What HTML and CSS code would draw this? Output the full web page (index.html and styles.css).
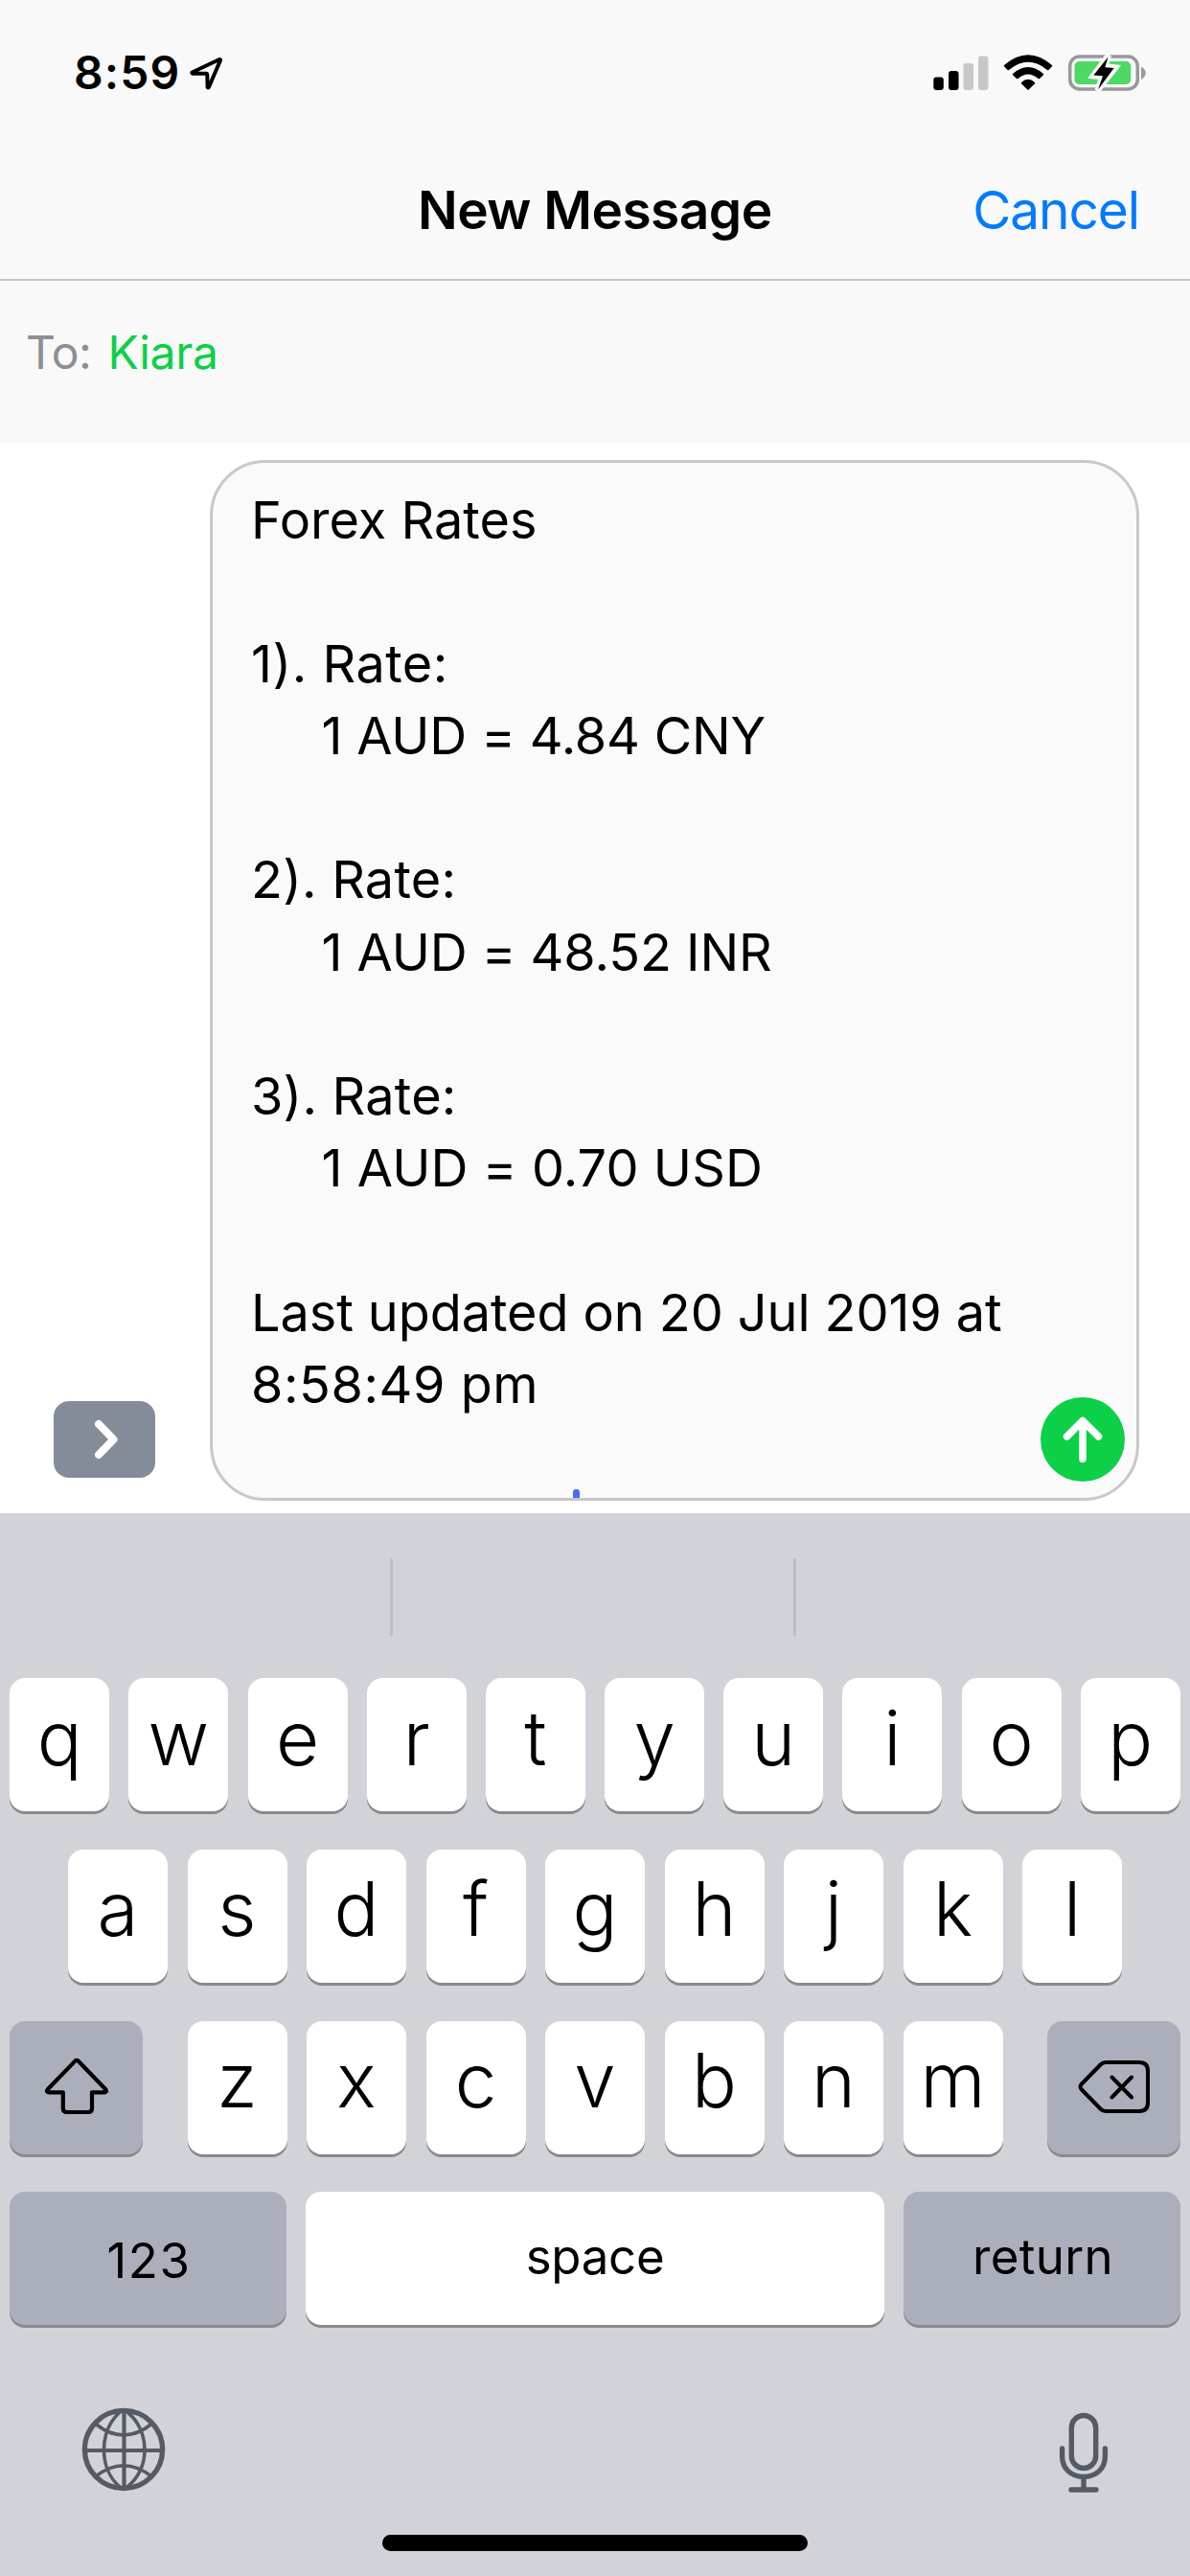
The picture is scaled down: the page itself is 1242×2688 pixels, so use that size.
FILE: index.html
```html
<!DOCTYPE html>
<html lang="en">
<head>
<meta charset="utf-8">
<title>New Message</title>
<link rel="stylesheet" href="styles.css">
</head>
<body>
<div class="screen">
  <header class="header">
    <div class="status">
      <span class="time">8:59</span>
      <svg class="location" width="36" height="36" viewBox="0 0 36 36"><path d="M32 4 L3.5 17.5 Q3 18.5 4 18.7 L18.5 18.8 Q19.3 19 19.3 20 L19.6 33 Q20.4 34 21 32.8 L33 5 Q33.200 3.800 32 4Z" fill="none" stroke="#000" stroke-width="4" stroke-linejoin="round"/></svg>
      <svg class="indicators" width="224" height="40" viewBox="0 0 224 40">
        <rect x="1.300" y="24.500" width="10.500" height="13.500" rx="3" fill="#000"/>
        <rect x="17" y="18" width="10.500" height="20" rx="3" fill="#000"/>
        <rect x="32.500" y="10" width="10.500" height="28" rx="3" fill="#c7c7c7"/>
        <rect x="48" y="2.500" width="10.500" height="35.500" rx="3" fill="#c7c7c7"/>
        <g fill="#000">
          <path d="M75 12 Q100 -9.500 125 12 Q125.500 12.800 124.800 13.500 L121.500 17 Q120.700 17.600 120 17 Q100 0.500 80 17 Q79.300 17.600 78.500 17 L75.200 13.500 Q74.500 12.800 75 12Z"/>
          <path d="M84 21 Q100 7 116 21 Q116.500 21.700 116 22.300 L112 26 Q111.200 26.600 110.500 26 Q100 17 89.500 26 Q88.800 26.600 88 26 L84 22.300 Q83.500 21.700 84 21Z"/>
          <path d="M93 30 Q100 23.500 107 30 Q107.500 30.600 107 31.200 L100.700 37.500 Q100 38.100 99.300 37.500 L93 31.200 Q92.500 30.600 93 30Z"/>
        </g>
        <rect x="143.700" y="3" width="70.600" height="34" rx="10" fill="none" stroke="#999" stroke-width="3.500"/>
        <rect x="148.500" y="8" width="58.700" height="24" rx="5" fill="#4cd964"/>
        <path d="M218 13.500 Q222.700 16 222.700 20.300 Q222.700 24.500 218 27Z" fill="#999"/>
        <path d="M184 1.500 L167.500 23.200 L177 24.200 L172.500 38.500 L191.500 14.300 L181 13.200Z" fill="#f9f9f9" stroke="#f9f9f9" stroke-width="6"/>
        <path d="M183.500 3.500 L168.300 22.500 L178 23.200 L173 37.500 L189.700 15 L180.300 14.300Z" fill="#000"/>
      </svg>
    </div>
    <nav class="nav">
      <h1 class="title">New Message</h1>
      <a class="cancel">Cancel</a>
    </nav>
    <div class="recipient"><span class="to">To:</span><span class="name">Kiara</span></div>
  </header>

  <main class="compose">
    <div class="drawer">
      <svg width="24" height="44" viewBox="0 0 24 44"><path d="M4 6 L19.500 22 L4 38" fill="none" stroke="#fff" stroke-width="8" stroke-linecap="round" stroke-linejoin="round"/></svg>
    </div>
    <div class="bubble">
      <p class="line">Forex Rates</p>
      <p class="line item first">1). Rate:</p>
      <p class="line rate cny">1 AUD = 4.84 CNY</p>
      <p class="line item">2). Rate:</p>
      <p class="line rate">1 AUD = 48.52 INR</p>
      <p class="line item">3). Rate:</p>
      <p class="line rate usd">1 AUD = 0.70 USD</p>
      <p class="line updated">Last updated on 20 Jul 2019 at</p>
      <p class="line clock">8:58:49 pm</p>
      <span class="caret"></span>
      <span class="send"><svg width="88" height="88" viewBox="0 0 88 88"><path d="M27.500 41 L44 24.500 L60.500 41 M44 26 V64.500" fill="none" stroke="#fff" stroke-width="7.500" stroke-linecap="round" stroke-linejoin="round"/></svg></span>
    </div>
  </main>

  <section class="keyboard">
    <div class="suggestions"><i class="bar"></i><i class="bar"></i></div>
    <div class="keys">
      <div class="row">
        <b class="key">q</b><b class="key">w</b><b class="key">e</b><b class="key">r</b><b class="key">t</b><b class="key">y</b><b class="key">u</b><b class="key">i</b><b class="key">o</b><b class="key">p</b>
      </div>
      <div class="row home-row">
        <b class="key">a</b><b class="key">s</b><b class="key">d</b><b class="key">f</b><b class="key">g</b><b class="key">h</b><b class="key">j</b><b class="key">k</b><b class="key">l</b>
      </div>
      <div class="row spread">
        <b class="key dark mod"><svg width="70" height="62" viewBox="0 0 70 62"><path d="M33.400 3.600 Q35 2 36.600 3.600 L65.500 33.500 Q67 36 64 36.300 H51 V53 Q51 57 47 57 H25 Q20.800 57 20.800 53 V36.300 H6 Q3 36 4.500 33.500Z" fill="none" stroke="#000" stroke-width="4.200" stroke-linejoin="round"/></svg></b>
        <div class="letters"><b class="key">z</b><b class="key">x</b><b class="key">c</b><b class="key">v</b><b class="key">b</b><b class="key">n</b><b class="key">m</b></div>
        <b class="key dark mod"><svg width="78" height="60" viewBox="0 0 78 60"><path d="M30 4 H65 Q74 4 74 13 V46 Q74 55 65 55 H30 Q27 55 24.500 52.500 L4.500 32 Q2.500 29.500 4.500 27 L24.500 6.500 Q27 4 30 4Z M36.500 19.500 L57 40.500 M57 19.500 L36.500 40.500" fill="none" stroke="#000" stroke-width="4" stroke-linejoin="round" stroke-linecap="round"/></svg></b>
      </div>
      <div class="row spread">
        <b class="key dark word digits">123</b><b class="key word space">space</b><b class="key dark word return">return</b>
      </div>
    </div>
    <div class="tools">
      <svg width="88" height="88" viewBox="0 0 88 88"><g fill="none" stroke="#555b65"><circle cx="44" cy="44" r="40.600" stroke-width="5.400"/><path d="M44.500 4 V84 M4 45 H84" stroke-width="4.200"/><path d="M40 5 C18 25 18 64 40 83 M48 5 C72 25 72 64 48 83 M15 17.500 Q44 40.500 73 17.500 M15 72 Q44 49.500 73 72" stroke-width="3.600"/></g></svg>
      <svg width="52" height="86" viewBox="0 0 52 86"><g fill="none" stroke="#555b65" stroke-width="5.400" stroke-linecap="round"><rect x="13.300" y="3.500" width="25.400" height="55" rx="12.700"/><path d="M3.600 38 V46 C3.600 59 13 67.500 26 67.500 C39 67.500 48.400 59 48.400 46 V38 M26 68 V80 M13 81 H39"/></g></svg>
    </div>
    <div class="home"></div>
  </section>
</div>
</body>
</html>
```
FILE: styles.css
```css
* { box-sizing: border-box; }

body {
  margin: 0;
  font-family: Inter, "Liberation Sans", sans-serif;
  color: #000;
}

svg { display: block; flex: none; }

.screen {
  width: 1242px;
  height: 2688px;
  display: flex;
  flex-direction: column;
  background: #fff;
  overflow: hidden;
}

/* Status bar, title bar and recipient */
.header { height: 462px; background: #f9f9f9; }

.status {
  height: 150px;
  padding: 46px 45px 0 77px;
  display: flex;
  align-items: flex-start;
}
.time {
  font-size: 48px;
  font-weight: 600;
  line-height: 60px;
  letter-spacing: 1.1px;
}
.location { margin: 12px 0 0 9px; }
.indicators { margin: 10px 0 0 auto; }

.nav {
  height: 143px;
  padding: 0 53px 4px 0;
  display: grid;
  grid-template-columns: 436px 1fr auto;
  align-items: center;
  border-bottom: 2px solid #c7c7c9;
}
.title {
  grid-column: 2;
  margin: 0;
  font-size: 55px;
  font-weight: 600;
  line-height: 64px;
  letter-spacing: -.55px;
}
.cancel {
  font-size: 55px;
  line-height: 64px;
  letter-spacing: -1.1px;
  color: #007aff;
}

.recipient {
  display: flex;
  padding: 45px 0 0 27px;
  font-size: 48px;
  line-height: 60px;
}
.to { width: 85.5px; letter-spacing: -.5px; color: #8e8e93; }
.name { letter-spacing: -.3px; color: #0bd048; }

/* Message area */
.compose {
  height: 1117px;
  padding: 18px 53px 13px 56px;
  display: flex;
  align-items: flex-end;
  justify-content: space-between;
}
.drawer {
  width: 106px;
  height: 80px;
  margin-bottom: 24px;
  display: flex;
  align-items: center;
  justify-content: center;
  padding-left: 3px;
  border-radius: 16px;
  background: #858c99;
}
.bubble {
  position: relative;
  width: 970px;
  height: 1086px;
  padding: 21.5px 0 0 40px;
  border: 3px solid #c7c7cc;
  border-radius: 58px;
  background: #fafafa;
}
.line {
  margin: 0;
  font-size: 54px;
  line-height: 75.2px;
  white-space: nowrap;
}
.item { margin-top: 75.2px; letter-spacing: .2px; }
.first { letter-spacing: .5px; }
.rate { padding-left: 73.5px; letter-spacing: -.07px; }
.cny { letter-spacing: -.17px; }
.usd { letter-spacing: .1px; }
.updated { margin-top: 75.2px; letter-spacing: -.07px; }
.clock { letter-spacing: .55px; }

.caret {
  position: absolute;
  left: 376px;
  bottom: 0;
  width: 7px;
  height: 9px;
  border-radius: 3px 3px 0 0;
  background: #4a6cf5;
}
.send {
  position: absolute;
  right: 12px;
  bottom: 17px;
  border-radius: 50%;
  background: #0bd048;
}

/* Keyboard */
.keyboard {
  height: 1109px;
  display: flex;
  flex-direction: column;
  background: #d2d3d8;
}
.suggestions {
  height: 172px;
  padding: 47px 0 0 407px;
  display: flex;
  gap: 418px;
}
.bar { width: 3px; height: 81px; border-radius: 2px; background: #bdbec3; }

.keys { display: grid; row-gap: 39.8px; padding: 0 10px; }
.row { display: flex; justify-content: center; gap: 20.2px; }
.home-row, .letters { gap: 20.5px; }
.spread { justify-content: space-between; gap: 0; }
.letters { display: flex; }
.key {
  width: 104px;
  height: 139px;
  display: flex;
  align-items: center;
  justify-content: center;
  padding-bottom: 14px;
  border-radius: 16px;
  background: #fff;
  box-shadow: 0 3px 0 #888a8e;
  font-size: 78px;
  font-weight: 350;
  line-height: 1;
}
.dark { background: #abafbb; }
.mod { width: 139px; padding-bottom: 0; }
.word { font-size: 51px; font-weight: 400; }
.digits { width: 289px; padding: 3px 0 0 2px; letter-spacing: 1.6px; }
.space { width: 604px; padding-bottom: 4px; letter-spacing: -.3px; }
.return { width: 289px; padding: 0 0 4px 2px; letter-spacing: .3px; }

.tools {
  display: flex;
  justify-content: space-between;
  align-items: flex-start;
  padding: 86px 85px 0 85px;
}
.tools svg:last-child { margin-top: 4.5px; }

.home {
  width: 444px;
  height: 17px;
  margin: auto auto 26px;
  border-radius: 9px;
  background: #000;
}
```
